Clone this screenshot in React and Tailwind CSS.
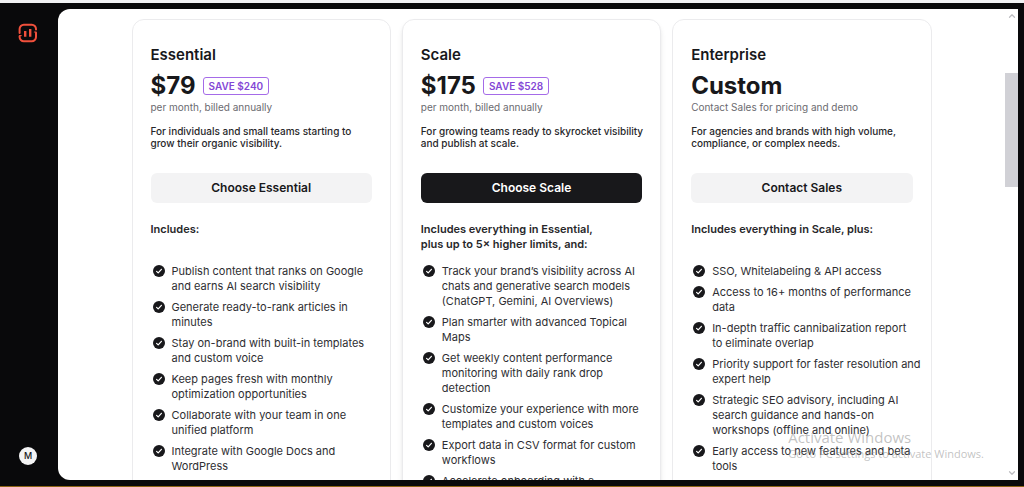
import clsx from 'clsx';
import { ChevronDown, ChevronUp } from 'lucide-react';

const plans = [
  {
    name: 'Essential',
    price: '$79',
    save: 'SAVE $240',
    billing: 'per month, billed annually',
    description: 'For individuals and small teams starting to grow\u00a0their organic visibility.',
    cta: 'Choose Essential',
    includes: ['Includes:'],
    features: [
      'Publish content that ranks on Google and earns AI search visibility',
      'Generate ready-to-rank articles in minutes',
      'Stay on-brand with built-in templates and\u00a0custom voice',
      'Keep pages fresh with monthly optimization opportunities',
      'Collaborate with your team in one unified platform',
      'Integrate with Google Docs and WordPress',
    ],
  },
  {
    name: 'Scale',
    price: '$175',
    save: 'SAVE $528',
    billing: 'per month, billed annually',
    description: 'For growing teams ready to skyrocket visibility and\u00a0publish at scale.',
    cta: 'Choose Scale',
    highlighted: true,
    includes: ['Includes everything in Essential,', 'plus up to 5× higher limits, and:'],
    features: [
      'Track your brand’s visibility across AI chats and generative search models (ChatGPT, Gemini, AI Overviews)',
      'Plan smarter with advanced Topical Maps',
      'Get weekly content performance monitoring with daily rank drop detection',
      'Customize your experience with more templates and custom voices',
      'Export data in CSV format for custom workflows',
      'Accelerate onboarding with a',
    ],
  },
  {
    name: 'Enterprise',
    price: 'Custom',
    billing: 'Contact Sales for pricing and demo',
    description: 'For agencies and brands with high volume, compliance, or complex needs.',
    cta: 'Contact Sales',
    includes: ['Includes everything in Scale, plus:'],
    features: [
      'SSO, Whitelabeling & API access',
      'Access to 16+ months of performance data',
      'In-depth traffic cannibalization report to\u00a0eliminate overlap',
      'Priority support for faster resolution and expert help',
      'Strategic SEO advisory, including AI search guidance and hands-on workshops (offline and online)',
      'Early access to new features and beta tools',
    ],
  },
];

function Logo() {
  return (
    <svg className="w-5 h-5" viewBox="0 0 20 20" fill="none" stroke="#f0503c" strokeWidth="2" strokeLinecap="round">
      <path d="M1.6 10V6a4.2 4.2 0 0 1 4.2-4.2h8A4.2 4.2 0 0 1 18 6v.6" />
      <path d="M18 9.8V14a4.2 4.2 0 0 1-4.2 4.2h-8A4.2 4.2 0 0 1 1.6 14v-.8" />
      <path d="M1.6 12.6h1.6M16.4 9H18" strokeWidth="1.2" />
      <path d="M7.2 8v5.7M12.2 6v7.7" strokeWidth="2.4" strokeLinecap="butt" />
    </svg>
  );
}

function CheckIcon() {
  return (
    <svg className="w-3 h-3 shrink-0 ml-0.5 mt-px" viewBox="0 0 12 12" fill="none">
      <circle cx="6" cy="6" r="6" fill="#18181b" />
      <path d="M3.6 6.4 5.2 7.9 8.4 4.3" stroke="#fff" strokeWidth="1.2" strokeLinecap="round" strokeLinejoin="round" />
    </svg>
  );
}

function PlanCard({ plan }) {
  return (
    <section
      className={clsx(
        'rounded-xl border border-[#ebebed] bg-white px-[18px] pt-[25px] pb-8',
        plan.highlighted && 'shadow-md shadow-black/10'
      )}
    >
      <h2 className="text-[15px] leading-5 font-semibold">{plan.name}</h2>
      <div className="mt-[7px] flex items-center gap-[7px]">
        <span className="text-[24px] leading-7 font-bold">{plan.price}</span>
        {plan.save && (
          <span className="rounded-[3px] border border-[#a56be8] px-[5px] text-[10px] leading-4 font-semibold text-[#8447d6]">
            {plan.save}
          </span>
        )}
      </div>
      <p className="text-[10px] leading-[14px] text-[#6b6b70]">{plan.billing}</p>
      <p className="-mr-3 mt-[11px] text-[10px] leading-3 font-medium text-[#27272a]">{plan.description}</p>
      <button
        className={clsx(
          'mt-6 h-[30px] w-full rounded-md text-[12px] font-semibold',
          plan.highlighted ? 'bg-[#18181b] text-white' : 'bg-[#f3f3f4]'
        )}
      >
        {plan.cta}
      </button>
      <h3 className="mt-[19px] h-[30px] text-[11px] leading-[15px] font-semibold text-[#27272a]">
        {plan.includes.map((line) => (
          <span key={line} className="block">{line}</span>
        ))}
      </h3>
      <ul className="-mr-3 mt-3 flex flex-col gap-1.5">
        {plan.features.map((feature) => (
          <li key={feature} className="flex gap-[7px] text-[11px] leading-[15px] text-[#2e2e32]">
            <CheckIcon />
            <span>{feature}</span>
          </li>
        ))}
      </ul>
    </section>
  );
}

export default function App() {
  return (
    <div className="relative flex h-screen flex-col overflow-hidden border-t-3 border-t-[#f1f2f4] border-b border-b-[#8a6414] bg-[#09090b] font-['Inter',sans-serif] text-[#18181b]">
      <div className="flex min-h-0 flex-1 py-1.5 pr-1.5">
        <aside className="flex w-[58px] shrink-0 flex-col items-center justify-between pt-3.5 pb-[15px] pr-0.5">
          <a href="#home" aria-label="Home">
            <Logo />
          </a>
          <button className="h-[18px] w-[18px] rounded-full bg-[#f4f4f5] text-[9px] font-medium">M</button>
        </aside>

        <div className="flex min-w-0 flex-1 overflow-hidden rounded-l-xl bg-white">
          <main className="min-w-0 flex-1 overflow-hidden pt-2.5">
            <div className="mx-auto grid max-w-[800px] grid-cols-3 gap-[11px]">
              {plans.map((plan) => (
                <PlanCard key={plan.name} plan={plan} />
              ))}
            </div>
          </main>

          {/* Scrollbar */}
          <div className="flex w-[13px] shrink-0 flex-col items-center justify-between py-0.5 text-[#bdbdc1]">
            <ChevronUp size={10} strokeWidth={3} />
            <div className="flex w-full flex-1 flex-col py-[52px]">
              <div className="h-[114px] bg-[#d1d1d6]" />
            </div>
            <ChevronDown size={10} strokeWidth={3} />
          </div>
        </div>
      </div>

      {/* Windows watermark */}
      <div className="pointer-events-none absolute right-10 bottom-6 font-['Open_Sans',sans-serif] text-[#8f8f8f]/55">
        <p className="text-[15px] leading-[18px]">Activate Windows</p>
        <p className="text-[11px] leading-4">Go to PC settings to activate Windows.</p>
      </div>
    </div>
  );
}
